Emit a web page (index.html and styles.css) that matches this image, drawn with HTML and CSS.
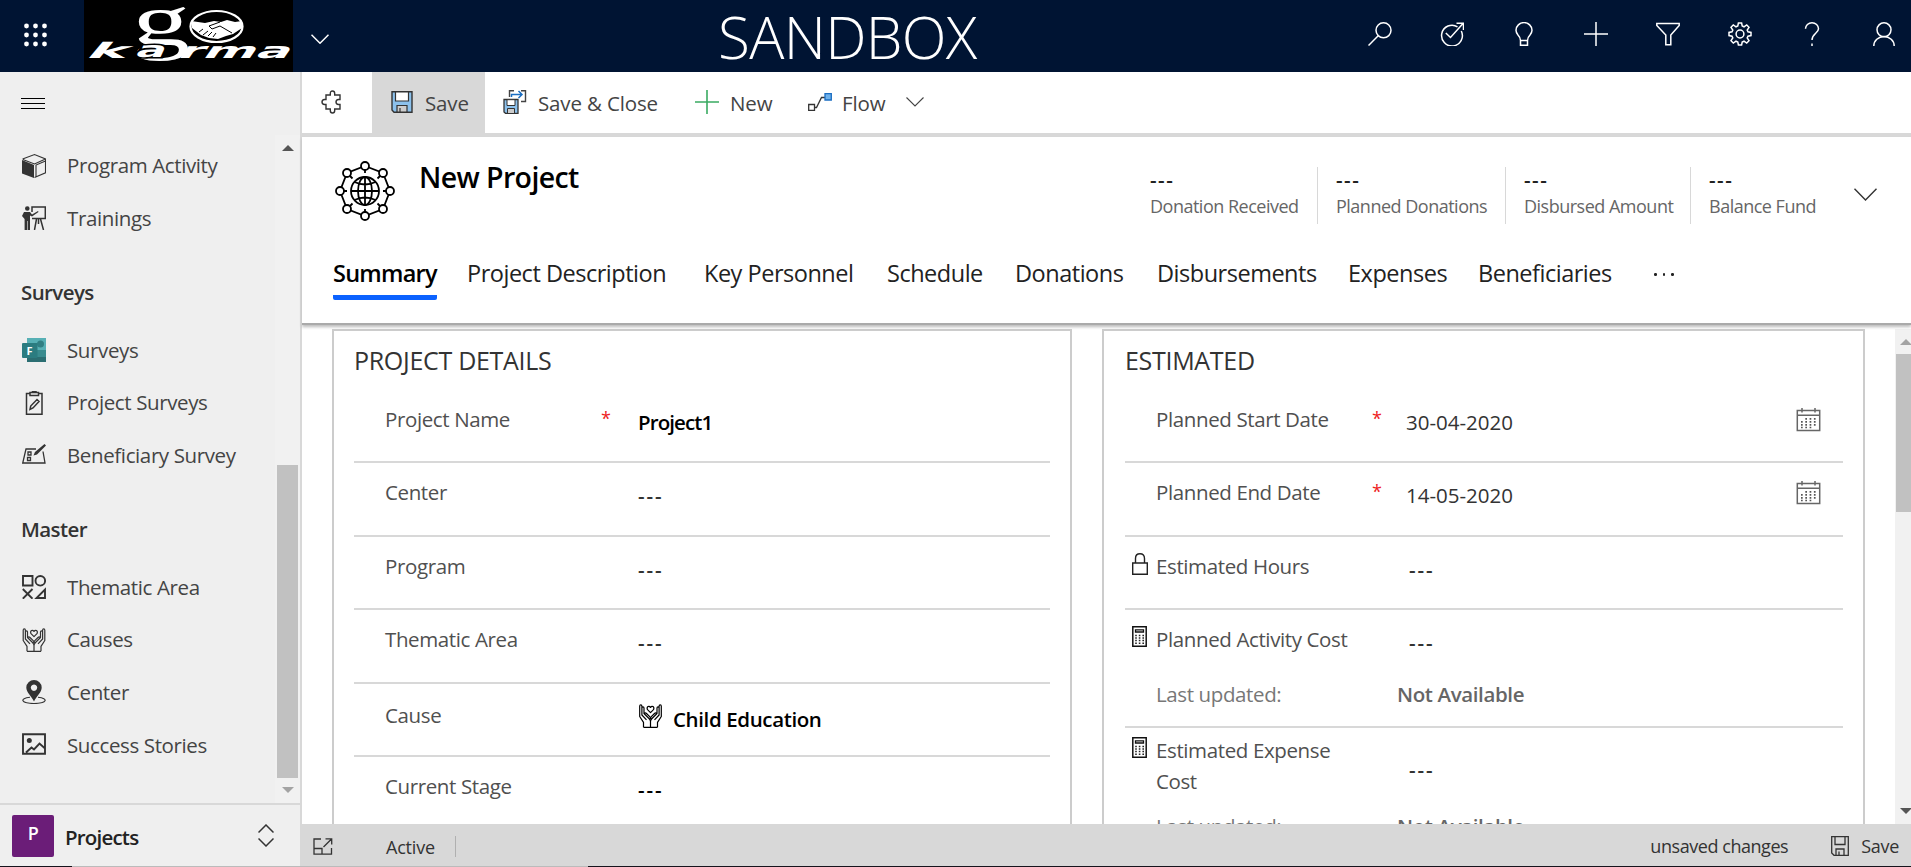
FILE: index.html
```html
<!DOCTYPE html>
<html lang="en">
<head>
<meta charset="utf-8">
<title>New Project</title>
<link rel="stylesheet" href="styles.css">
</head>
<body>
<svg class="defs" width="0" height="0">
  <symbol id="hands" viewBox="0 0 24 24"><path fill="none" stroke="currentColor" stroke-width="1.2" stroke-linejoin="round" d="M5 23.3v-5L1.2 12.500V2.300Q1.200.8 2.300.8 3.400.8 3.400 2.300V8M3.400 8V4Q3.500 2.800 4.500 2.800 5.500 2.800 5.500 4V9.500L10.500 14.500Q12 16 12 17.500V23.300M3.400 7.500V11L8 15.800M5.500 9.500Q6.800 8.300 8 9.500L11.200 12.700Q12 13.500 12 15M19 23.300v-5l3.800-5.800V2.300Q22.800.8 21.700.8 20.600.8 20.600 2.300V8M20.600 8V4Q20.500 2.800 19.500 2.800 18.500 2.800 18.500 4V9.500L13.500 14.500Q12 16 12 17.500M20.600 7.500V11L16 15.800M18.500 9.500Q17.200 8.300 16 9.500L12.800 12.700Q12 13.500 12 15M5 23.300H19M12 8.700L9 5.700Q8 3.500 9.500 2.500 11 1.800 12 3.400 13 1.800 14.500 2.500 16 3.500 15 5.700Z"/></symbol>
  <symbol id="calendar" viewBox="0 0 24 24"><path fill="none" stroke="#666" stroke-width="1.500" d="M.8 2.500H23.200V22.500H.8ZM.8 7.300H23.200M5.500 0V4.500M18.500 0V4.500"/><path stroke="#555" stroke-width="1.700" stroke-dasharray="1.700 2.600" d="M8.800 10.800H20M4.500 13.800H20M4.500 16.800H20M4.500 19.500H15.500"/></symbol>
  <symbol id="calc" viewBox="0 0 15 21"><path fill="none" stroke="#111" stroke-width="1.500" d="M.8.8H14.200V20.200H.8Z"/><path fill="none" stroke="#111" stroke-width="1.300" d="M3.500 3.800H11.500V6H3.500Z"/><path stroke="#222" stroke-width="1.400" stroke-dasharray="1.600 2" d="M3.200 9.500H12.500M3.200 12H12.500M3.200 14.500H12.500M3.200 17.300H12.500"/></symbol>
</svg>
<header class="topbar">
  <svg class="waffle" width="24" height="24" viewBox="0 0 24 24" fill="#fff"><circle cx="2.500" cy="3" r="2.400"/><circle cx="11.500" cy="3" r="2.400"/><circle cx="20.500" cy="3" r="2.400"/><circle cx="2.500" cy="12" r="2.400"/><circle cx="11.500" cy="12" r="2.400"/><circle cx="20.500" cy="12" r="2.400"/><circle cx="2.500" cy="21" r="2.400"/><circle cx="11.500" cy="21" r="2.400"/><circle cx="20.500" cy="21" r="2.400"/></svg>
  <svg class="logo" width="209" height="72" viewBox="0 0 209 72">
    <rect width="209" height="72" fill="#000"/>
    <g fill="#fff">
      <text class="logo-g" x="48" y="44.500" textLength="58" lengthAdjust="spacingAndGlyphs">g</text>
      <text class="logo-k" transform="translate(0 57.500) skewX(-40)" x="0" y="0" textLength="40" lengthAdjust="spacingAndGlyphs">k</text>
      <text class="logo-k boxed" transform="translate(0 57) skewX(-25)" x="50" y="0" textLength="30" lengthAdjust="spacingAndGlyphs">a</text>
      <text class="logo-k" transform="translate(0 57.500) skewX(-35)" x="92" y="0" textLength="112" lengthAdjust="spacingAndGlyphs">rma</text>
    </g>
    <ellipse cx="132.500" cy="26.500" rx="26" ry="15.500" fill="none" stroke="#fff" stroke-width="2.200"/>
    <path fill="#fff" d="M107 21l14 2 9-2 7 1 6-2 8 2 7-1v7l-9 6-7 2-8 3-9-1-8-3-9-7z"/>
    <path fill="none" stroke="#000" stroke-width="1" d="M136 22l-11 4 3 3 8-3 12 7M115 32l4-3M119 35l5-4M124 36l4-4M129 37l3-4"/>
  </svg>
  <svg class="chev-top" width="18" height="10" viewBox="0 0 18 10" fill="none" stroke="#fff" stroke-width="1.500"><path d="M.5.700L9 9.200 17.500.700"/></svg>
  <div class="env">SANDBOX</div>
  <nav class="top-icons">
    <svg viewBox="0 0 24 24"><circle cx="15.500" cy="8.300" r="7.500"/><path d="M10.200 13.800L.5 23.500"/></svg>
    <svg viewBox="0 0 24 24"><path d="M17.500 4.800A10.400 10.400 0 1 0 21.300 9M5.800 11L10.500 15.500 23 1.500M16.500 1.200H23.500V8"/></svg>
    <svg viewBox="0 0 24 24"><path d="M8.500 18.500Q8.500 15.500 6 13 4 10.500 4 8.300A7.800 7.500 0 0 1 20 8.300Q20 10.500 18 13 15.500 15.500 15.500 18.500ZM8.500 18.500V23.200H15.500V18.500"/></svg>
    <svg viewBox="0 0 24 24"><path d="M12 0V24M0 12H24"/></svg>
    <svg viewBox="0 0 24 24"><path d="M.8 1.500H23.200V3.500L14.800 13V22.800H9.800V13L.8 3.500Z"/></svg>
    <svg viewBox="0 0 24 24"><circle cx="12" cy="12" r="3.900"/><path d="M10.400 1h3.200l.6 3 1.800.8L18.700 3 21 5.300 19.200 8l.8 1.800 3 .6v3.200l-3 .6-.8 1.800 1.800 2.700-2.300 2.300L16 19.200l-1.800.8-.6 3h-3.200l-.6-3L8 19.200 5.300 21 3 18.700 4.800 16 4 14.200l-3-.6v-3.200l3-.6L4.800 8 3 5.300 5.300 3 8 4.800 9.800 4Z"/></svg>
    <svg viewBox="0 0 24 24"><path d="M5.500 6.800A6.500 6 0 0 1 18.500 6.800C18.500 11 12 12 12 18M12 21.500V24"/></svg>
    <svg viewBox="0 0 24 24"><circle cx="12" cy="7.800" r="7"/><path d="M1.800 24A10.200 9.500 0 0 1 22.200 24"/></svg>
  </nav>
</header>
<div class="body">
  <aside class="side">
    <svg class="burger" width="24" height="12" viewBox="0 0 24 12" fill="#000"><path d="M0 1H24V2H0ZM0 6H24V7H0ZM0 11H24V12H0Z"/></svg>
    <div class="nav-area">
      <nav class="nav">
        <a class="item"><svg viewBox="0 0 24 24"><path fill="#333" d="M0 6L12 11V24L0 19.500Z"/><path fill="none" stroke="#333" stroke-width="1.100" d="M.6 5L12.500.6 23.500 5V18.800L12.500 23.500M.8 5.500L12.500 10 23.500 5M14 23V11L23.500 7"/></svg>Program Activity</a>
        <a class="item"><svg viewBox="0 0 24 24"><path fill="#333" d="M3 2.500a2.300 2.300 0 0 1 4.600 0 2.300 2.300 0 0 1-4.600 0M2 6H8L10 8.500 16 5 16.500 6 10 10.500 8 9.500V24H5.600V15H5V24H2.600V13L0 10Z"/><path fill="none" stroke="#333" stroke-width="1.500" d="M10 6V1H23.300V12.500H10M14.500 13L12.500 24M18.500 13L21.500 24M16.500 13V18"/></svg>Trainings</a>
        <h3>Surveys</h3>
        <a class="item"><svg viewBox="0 0 24 24"><path fill="#2f8f8f" d="M5 0H24V12H5Z"/><path fill="#57b0b5" d="M5 0H24V12H15V5H5Z"/><path fill="#2b6e72" d="M5 12H24V24H5Z"/><path fill="#398b8e" d="M15 12H24V19H15Z"/><circle cx="18.500" cy="6" r="3.500" fill="#317f83"/><rect y="5" width="15.500" height="15" rx="1" fill="#2b7c80"/><text class="f-mark" x="4.500" y="16.500">F</text></svg>Surveys</a>
        <a class="item"><svg viewBox="0 0 24 24"><path fill="none" stroke="#333" stroke-width="1.500" d="M8 2.500H4.500V23.200H20V2.500H16.500M8 1.500H16.500V4.500H8ZM10.500 1V.3H14V1M8 18.500L8.700 15 15 8.500 17 10.500 11 17Z"/></svg>Project Surveys</a>
        <a class="item"><svg viewBox="0 0 24 24"><path fill="none" stroke="#333" stroke-width="1.300" d="M14 6H4L.7 20H23L21 8.500M6 9H9V12H6ZM5.500 14.500H8.500V17.500H5.500Z"/><path fill="#333" d="M11.500 12.500L13 9 22.500 1 24 2.500 15 11.500Z"/></svg>Beneficiary Survey</a>
        <h3>Master</h3>
        <a class="item"><svg viewBox="0 0 24 24"><path fill="none" stroke="#333" stroke-width="1.900" d="M1 1H10.500V10.500H1ZM.8 14L10.500 23.700M10.500 14L.8 23.700M14.500 23H23V14.500Z"/><circle cx="18.300" cy="5.800" r="4.800" fill="none" stroke="#333" stroke-width="1.900"/></svg>Thematic Area</a>
        <a class="item"><svg><use href="#hands"/></svg>Causes</a>
        <a class="item"><svg viewBox="0 0 24 24"><path fill="#333" fill-rule="evenodd" d="M12 21.500C9.500 16 4.300 12.500 4.300 7.500A7.700 7.500 0 0 1 19.700 7.500C19.700 12.500 14.500 16 12 21.500ZM12 4.500a3.200 3.200 0 1 0 .01 0Z"/><path fill="none" stroke="#333" stroke-width="1.100" d="M8 17.300C-3 18.500-1 23.500 12 23.500S27 18.500 16 17.300"/></svg>Center</a>
        <a class="item"><svg viewBox="0 0 24 24"><path fill="none" stroke="#333" stroke-width="1.900" d="M1 1.300H23V20.700H1ZM4 19.500L9.500 14.500 12 16.500 17.500 10.500 22.500 15"/><circle cx="7.300" cy="7.500" r="2.500" fill="#333"/></svg>Success Stories</a>
      </nav>
      <div class="side-scroll"><i class="up"></i><b></b><i class="down"></i></div>
    </div>
    <div class="area-switch">
      <span class="avatar">P</span><span class="area-name">Projects</span>
      <svg width="16" height="23" viewBox="0 0 16 23" fill="none" stroke="#333" stroke-width="1.500"><path d="M.5 8.500L8 1 15.500 8.500M.5 14.500L8 22 15.500 14.500"/></svg>
    </div>
  </aside>
  <main class="main">
    <div class="commands">
      <svg class="puzzle" width="22" height="24" viewBox="0 0 22 24" fill="none" stroke="#333" stroke-width="1.400"><path d="M5 5H9.300V3.500Q9.300 1 11.500 1T13.700 3.500V5H19V9.500H17.500Q15 9.700 15 12T17.500 14.500H19V19H13.700V20.500Q13.700 23 11.500 23T9.300 20.500V19H5V14.500H3.500Q1 14.300 1 12T3.500 9.500H5Z"/></svg>
      <div class="cmd active"><svg width="22" height="22" viewBox="0 0 22 22"><path fill="#8cc1ec" stroke="#333" stroke-width="1.400" d="M1 .8H21V21.200H3L1 19Z"/><path fill="#fff" stroke="#333" stroke-width="1.200" d="M4.500 1H17.500V10H4.500Z"/><path fill="#ccc" stroke="#333" stroke-width="1.200" d="M6 21V14.500H16V21ZM9 21V17"/></svg>Save</div>
      <div class="cmd close"><svg width="24" height="24" viewBox="0 0 24 24"><path fill="none" stroke="#444" stroke-width="1.400" d="M6.500 7V.8H11M18 .8H22.500V11.500H18"/><path fill="none" stroke="#1b6ec2" stroke-width="1.500" d="M8.500 7V4.500H18M15.500 1L19 4.500 15.500 8"/><path fill="#8cc1ec" stroke="#333" stroke-width="1.300" d="M1 9.500H15V23.300H2.500L1 22Z"/><path fill="#fff" stroke="#333" d="M4 9.700H12V15.500H4Z"/><path fill="#ccc" stroke="#333" d="M4.500 23V18.500H11.500V23"/></svg>Save &amp; Close</div>
      <div class="cmd new"><svg width="24" height="24" viewBox="0 0 24 24"><path stroke="#3aab62" stroke-width="1.600" d="M12 0V24M0 12H24"/></svg>New</div>
      <div class="cmd flow"><svg width="24" height="18" viewBox="0 0 24 18"><path fill="none" stroke="#333" stroke-width="1.300" d="M.7 11.500H6.500V17.300H.7ZM6.500 14.500H8.500L13.500 4.500H17"/><path fill="#6fb1ea" stroke="#1b6ec2" stroke-width="1.300" d="M17 .7H23.300V7H17Z"/></svg><span>Flow</span><svg class="chev" width="18" height="10" viewBox="0 0 18 10" fill="none" stroke="#444" stroke-width="1.100"><path d="M.5.500L9 9 17.500.500"/></svg></div>
    </div>
    <section class="record">
      <div class="record-top">
        <svg class="globe" width="60" height="60" viewBox="0 0 60 60" fill="none" stroke="#000" stroke-width="1.800">
          <path d="M30 5L48 12 55 30 48 48 30 55 12 48 5 30 12 12ZM30 8V12M30 48V52M8 30H12M48 30H52M15 15L17.500 17.500M45 15L42.500 17.500M15 45L17.500 42.500M45 45L42.500 42.500"/>
          <g fill="#fff"><circle cx="30" cy="5" r="4"/><circle cx="48" cy="12" r="4"/><circle cx="55" cy="30" r="4"/><circle cx="48" cy="48" r="4"/><circle cx="30" cy="55" r="4"/><circle cx="12" cy="48" r="4"/><circle cx="5" cy="30" r="4"/><circle cx="12" cy="12" r="4"/><circle cx="30" cy="30" r="14"/></g>
          <ellipse cx="30" cy="30" rx="7" ry="14"/><path d="M16 30H44M30 16V44M19.500 21Q30 26 40.500 21M19.500 39Q30 34 40.500 39"/>
        </svg>
        <h1>New Project</h1>
        <div class="stats">
          <div><b>---</b><span>Donation Received</span></div>
          <div><b>---</b><span>Planned Donations</span></div>
          <div><b>---</b><span>Disbursed Amount</span></div>
          <div><b>---</b><span>Balance Fund</span></div>
        </div>
        <svg class="expand" width="23" height="13" viewBox="0 0 23 13" fill="none" stroke="#333" stroke-width="1.400"><path d="M.5.700L11.500 12 22.500.700"/></svg>
      </div>
      <nav class="tabs"><a class="on"><span>Summary</span></a><a>Project Description</a><a>Key Personnel</a><a>Schedule</a><a>Donations</a><a>Disbursements</a><a>Expenses</a><a>Beneficiaries</a><a class="more"><i></i><i></i><i></i></a></nav>
    </section>
    <div class="content">
      <section class="card left">
        <h2>PROJECT DETAILS</h2>
        <div class="field"><label>Project Name</label><em>*</em><strong class="name">Project1</strong></div>
        <div class="field"><label>Center</label><em></em><span class="dash">---</span></div>
        <div class="field"><label>Program</label><em></em><span class="dash">---</span></div>
        <div class="field"><label>Thematic Area</label><em></em><span class="dash">---</span></div>
        <div class="field cause"><label>Cause</label><em></em><strong class="lookup"><svg width="25" height="24"><use href="#hands"/></svg>Child Education</strong></div>
        <div class="field"><label>Current Stage</label><em></em><span class="dash dark">---</span></div>
      </section>
      <section class="card right">
        <h2>ESTIMATED</h2>
        <div class="field"><i></i><label>Planned Start Date</label><em>*</em><span class="date">30-04-2020</span><svg class="cal" width="25" height="24"><use href="#calendar"/></svg></div>
        <div class="field"><i></i><label>Planned End Date</label><em>*</em><span class="date">14-05-2020</span><svg class="cal" width="25" height="24"><use href="#calendar"/></svg></div>
        <div class="field"><i><svg width="16" height="22" viewBox="0 0 16 22" fill="none" stroke="#222" stroke-width="1.400"><path d="M.7 10H15.300V21.300H.7ZM3.500 10V5.500Q3.500.8 8 .8T12.500 5.500V10"/></svg></i><label>Estimated Hours</label><em></em><span class="dash">---</span></div>
        <div class="field tall"><i><svg width="15" height="21"><use href="#calc"/></svg></i><label>Planned Activity Cost</label><em></em><span class="dash">---</span><label class="upd">Last updated:</label><strong class="na">Not Available</strong></div>
        <div class="field expense"><i><svg width="15" height="21"><use href="#calc"/></svg></i><label>Estimated Expense<br>Cost</label><em></em><span class="dash">---</span><label class="upd">Last updated:</label><strong class="na">Not Available</strong></div>
      </section>
      <div class="main-scroll"><i class="up"></i><b></b><i class="down"></i></div>
    </div>
    <footer class="status">
      <svg width="20" height="17" viewBox="0 0 20 17" fill="none" stroke="#333" stroke-width="1.300"><path d="M8 1H1V16.200H18.500V10M1 10.500H9V16M10.500 9L18.500 1M12.500.8H18.700V6.500"/></svg>
      <span class="state">Active</span>
      <span class="unsaved">unsaved changes</span>
      <svg width="18" height="20" viewBox="0 0 18 20" fill="none" stroke="#333" stroke-width="1.300"><path d="M.7.700H17.300V19.300H3L.7 17ZM4 .7V8.500H14V.7M5 19V13H13V19M8 19V15.500"/></svg>
      <span class="save2">Save</span>
    </footer>
  </main>
</div>
<div class="edge"><i></i><b></b></div>
</body>
</html>
```
FILE: styles.css
```css
* { box-sizing: border-box; }
body { margin: 0; width: 1911px; height: 867px; overflow: hidden; display: flex; flex-direction: column; background: #fff; color: #333; font: 20.5px/30px "Open Sans", "Noto Sans", sans-serif; letter-spacing: -0.38px; }
h1, h2, h3 { margin: 0; }
svg { flex: none; display: block; }
.defs { position: absolute; }

.topbar { flex: none; height: 72px; background: #001433; display: flex; align-items: flex-start; }
.waffle { margin: 23px 34px 0 24px; width: 24px; }
.logo { margin-left: 2px; letter-spacing: 0; }
.logo-g { font: 74px "Liberation Serif", serif; }
.logo-k { font: bold 21.500px "DejaVu Sans", sans-serif; }
.boxed { stroke: #000; stroke-width: 3px; paint-order: stroke; }
.chev-top { margin: 34px 0 0 18px; }
.env { width: 262px; height: 72px; margin-left: 389px; color: #fff; font-size: 58.500px; line-height: 72px; font-weight: 300; white-space: nowrap; letter-spacing: -0.700px; }
.top-icons { display: flex; gap: 48px; margin: 22px 0 0 auto; padding-right: 15px; }
.top-icons svg { width: 24px; height: 24px; fill: none; stroke: #fff; stroke-width: 1.500; }

.body { flex: none; height: 794px; display: flex; }
.side { width: 302px; background: #efefef; border-right: 2px solid #d8d8d8; display: flex; flex-direction: column; }
.burger { margin: 25px 0 26px 21px; }
.nav-area { flex: 1; display: flex; justify-content: space-between; min-height: 0; }
.nav { padding-top: 4.600px; }
.item { display: flex; align-items: center; height: 52.600px; padding-left: 22px; gap: 21px; color: #444; white-space: nowrap; line-height: 35px; }
.item svg { width: 24px; height: 24px; color: #333; }
.f-mark { font: bold 11px "Open Sans", sans-serif; fill: #fff; }
.nav h3 { height: 79.200px; padding: 32px 0 0 21px; font-size: 20.500px; font-weight: 600; letter-spacing: -0.600px; }
.side-scroll { width: 25px; background: #f1f1f1; display: flex; flex-direction: column; align-items: center; }
.side-scroll b { width: 21px; height: 313px; background: #c1c1c1; margin-top: 314px; }
.up, .down { border: 6px solid transparent; border-top-width: 0; border-bottom: 6px solid #555; margin-top: 10px; width: 0; }
.down { border-top: 6px solid #a3a3a3; border-bottom-width: 0; margin-top: 9px; }
.area-switch { flex: none; height: 63px; border-top: 2px solid #d8d8d8; display: flex; align-items: center; padding: 0 26px 0 12px; }
.avatar { width: 42px; height: 42px; border-radius: 2px; background: #6b1d78; color: #fff; font-weight: 600; font-size: 18px; line-height: 37px; text-align: center; }
.area-name { margin: 3px auto 0 11px; font-weight: 600; color: #222; letter-spacing: -0.800px; }

.main { flex: 1; min-width: 0; display: flex; flex-direction: column; }
.commands { height: 65px; flex: none; border-bottom: 4px solid #d8d8d8; display: flex; }
.puzzle { margin: 18px 29px 0 19px; }
.cmd { display: flex; align-items: center; height: 61px; gap: 12px; white-space: nowrap; color: #444; letter-spacing: -0.150px; }
.cmd svg { margin-bottom: 1px; }
.active { width: 113px; height: 65px; padding: 0 0 4px 19px; background: #d8d8d8; }
.close { width: 210px; padding-left: 18px; gap: 11px; }
.new { width: 113px; gap: 11px; }
.flow { gap: 10px; }
.flow span { width: 44px; }
.flow .chev { margin-left: 10px; }

.record { height: 188px; flex: none; border-bottom: 2px solid #aaa; box-shadow: 0 2px 3px #bbb; position: relative; }
.record-top { height: 110px; display: flex; }
.globe { margin: 24px 24px 0 33px; }
h1 { width: 731px; font-size: 28.500px; font-weight: 600; line-height: 40px; padding-top: 20px; color: #000; letter-spacing: -0.600px; }
.stats { display: grid; grid-template-columns: 167px 188px 185px 130px; margin-top: 30px; height: 57px; }
.stats div { display: flex; flex-direction: column; border-left: 1.500px solid #d8d8d8; padding-left: 18px; }
.stats div:first-child { border-left: 0; padding-left: 0; }
.stats b { font-weight: 600; color: #222; line-height: 25px; letter-spacing: 1.500px; }
.stats span { font-size: 18px; line-height: 28px; color: #666; white-space: nowrap; letter-spacing: -0.500px; }
.expand { margin: 51px 34px 0 auto; }
.tabs { display: grid; grid-template-columns: 134px 237px 183px 128px 142px 191px 130px 176px 30px; padding: 8px 0 0 31px; font-size: 23.500px; line-height: 36px; color: #222; white-space: nowrap; letter-spacing: -0.480px; }
.tabs span { display: inline-block; width: 104px; height: 45px; border-bottom: 5px solid #0b62ff; border-radius: 2px; font-weight: 600; color: #000; letter-spacing: -0.750px; }
.more { display: flex; gap: 6px; padding-top: 18px; }
.more i { width: 2.500px; height: 2.500px; background: #222; border-radius: 50%; }

.content { height: 499px; padding: 4px 0 0 30px; display: flex; overflow: hidden; }
.card { border: 2px solid #ccc; border-bottom: 0; height: 520px; flex: none; }
.left { width: 740px; padding: 0 20px; margin-right: 30px; }
.right { width: 763px; padding: 0 20px 0 21px; margin-right: 30px; }
.card h2 { font-weight: 400; font-size: 25px; line-height: 36px; padding-top: 11px; height: 58.500px; letter-spacing: -0.300px; }
.field { display: grid; height: 73.500px; border-bottom: 2px solid #d8d8d8; padding-top: 14px; align-items: start; align-content: start; color: #333; }
.left .field { grid-template-columns: 216px 37px 1fr; padding-left: 31px; }
.field:last-child { border: 0; }
.field label { color: #505050; white-space: nowrap; }
.field em { color: #e22; font-style: normal; font-size: 18px; line-height: 28px; }
.field strong { font-weight: 600; color: #000; padding-top: 4px; }
.field .name { padding-top: 3px; letter-spacing: -0.900px; }
.field > span { padding-top: 4px; }
.field .date { letter-spacing: 0; padding-top: 3px; }
.field .dash { font-weight: 600; letter-spacing: 1.900px; padding-top: 3px; }
.field .dark { color: #000; }
.cause { padding-top: 16px; }
.lookup { display: flex; gap: 10px; }
.right .field { grid-template-columns: 31px 216px 34px 390px 25px; }
.right .field i { padding: 2px 0 0 7px; }
.right .dash { padding-left: 3px; }
.cal { margin-top: 4px; }
.right .field.tall { height: 118px; grid-template-rows: 55px 30px; }
.right .upd { grid-column: 2 / 4; color: #777; }
.right .na { grid-column: 4; color: #666; padding-top: 0; margin-left: -9px; }
.right .expense { height: 120px; padding-top: 7px; grid-template-rows: 76px 30px; }
.expense label { line-height: 31px; }
.right .expense .dash { padding-top: 19px; }
.main-scroll { flex: none; width: 22px; background: #f1f1f1; display: flex; flex-direction: column; align-items: center; overflow: hidden; }
.main-scroll b { width: 20px; height: 158px; background: #c1c1c1; margin-top: 9px; }
.main-scroll .up { border-bottom-color: #a3a3a3; }
.main-scroll .down { border-top-color: #555; margin-top: 296px; }

.status { flex: none; height: 42px; background: #d8d8d8; display: flex; align-items: center; font-size: 18px; line-height: 32px; color: #333; padding: 2px 12px 0 11px; white-space: nowrap; letter-spacing: -0.450px; }
.state { margin-left: 53px; width: 70px; height: 21px; line-height: 22px; border-right: 1px solid #b0b0b0; letter-spacing: -0.200px; }
.unsaved { margin: 0 43px 0 auto; }
.save2 { margin-left: 12px; letter-spacing: -0.300px; }
.edge { height: 1px; display: flex; background: #15131c; }
.edge i { width: 72px; }
.edge b { width: 516px; background: #bbb; }
```
